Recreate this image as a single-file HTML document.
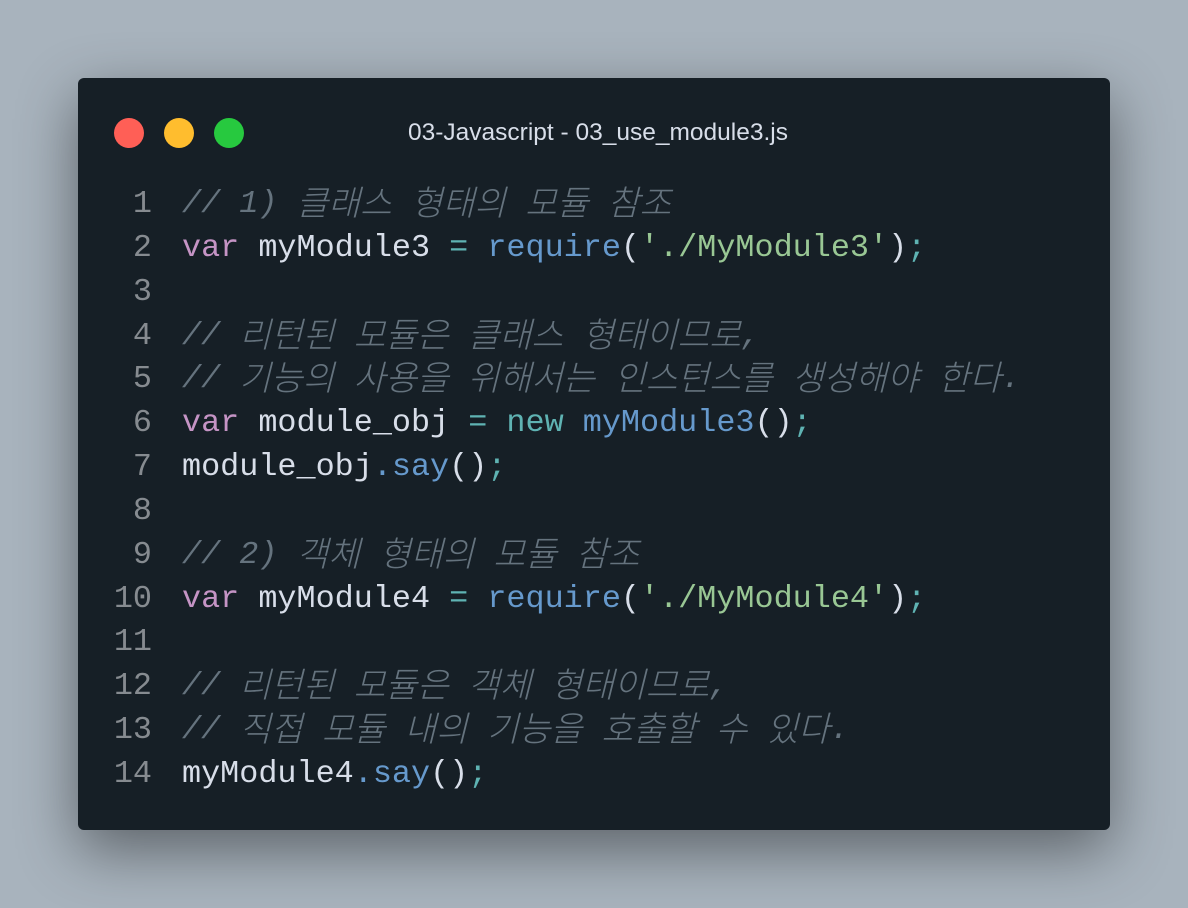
<!DOCTYPE html>
<html><head><meta charset="utf-8"><style>
html,body{margin:0;padding:0}
body{width:1188px;height:908px;background:#a8b3bd;position:relative;overflow:hidden}
.win{position:absolute;left:78px;top:78px;width:1032px;height:752px;background:#161f26;border-radius:6px;box-shadow:0 20px 60px rgba(0,0,0,0.45)}
.dot{position:absolute;top:40px;width:30px;height:30px;border-radius:50%}
.title{position:absolute;left:0;right:0;top:40px;text-align:center;font:24.5px "Liberation Sans",sans-serif;color:#d8dee9;line-height:30px;padding-left:8px}
.code{position:absolute;left:0;top:105px;font-family:"Liberation Mono","Noto Sans CJK KR",monospace;font-size:31.8px;color:#d8dee9;white-space:pre}
.code>div{height:43.85px;line-height:43.85px;overflow:visible}
.ln{display:inline-block;width:74px;text-align:right;color:#868b90;margin-right:30px}
.c{color:#65737e;font-style:italic}
.k{font-size:34.5px;line-height:0;font-family:"Noto Sans CJK KR",sans-serif;vertical-align:-3px;font-weight:300}
.kw{color:#c594c5}.op{color:#5fb3b3}.fn{color:#6699cc}.s{color:#99c794}
</style></head><body>
<div class="win">
<div class="dot" style="left:36px;background:#ff5f56"></div>
<div class="dot" style="left:86px;background:#ffbd2e"></div>
<div class="dot" style="left:136px;background:#27c93f"></div>
<div class="title">03-Javascript - 03_use_module3.js</div>
<div class="code"><div><span class="ln">1</span><span class="c">// 1) <span class="k">클래스</span> <span class="k">형태의</span> <span class="k">모듈</span> <span class="k">참조</span></span></div><div><span class="ln">2</span><span class="kw">var</span> myModule3 <span class="op">=</span> <span class="fn">require</span>(<span class="s">'./MyModule3'</span>)<span class="op">;</span></div><div><span class="ln">3</span></div><div><span class="ln">4</span><span class="c">// <span class="k">리턴된</span> <span class="k">모듈은</span> <span class="k">클래스</span> <span class="k">형태이므로</span>,</span></div><div><span class="ln">5</span><span class="c">// <span class="k">기능의</span> <span class="k">사용을</span> <span class="k">위해서는</span> <span class="k">인스턴스를</span> <span class="k">생성해야</span> <span class="k">한다</span>.</span></div><div><span class="ln">6</span><span class="kw">var</span> module_obj <span class="op">=</span> <span class="op">new</span> <span class="fn">myModule3</span>()<span class="op">;</span></div><div><span class="ln">7</span>module_obj<span class="fn">.say</span>()<span class="op">;</span></div><div><span class="ln">8</span></div><div><span class="ln">9</span><span class="c">// 2) <span class="k">객체</span> <span class="k">형태의</span> <span class="k">모듈</span> <span class="k">참조</span></span></div><div><span class="ln">10</span><span class="kw">var</span> myModule4 <span class="op">=</span> <span class="fn">require</span>(<span class="s">'./MyModule4'</span>)<span class="op">;</span></div><div><span class="ln">11</span></div><div><span class="ln">12</span><span class="c">// <span class="k">리턴된</span> <span class="k">모듈은</span> <span class="k">객체</span> <span class="k">형태이므로</span>,</span></div><div><span class="ln">13</span><span class="c">// <span class="k">직접</span> <span class="k">모듈</span> <span class="k">내의</span> <span class="k">기능을</span> <span class="k">호출할</span> <span class="k">수</span> <span class="k">있다</span>.</span></div><div><span class="ln">14</span>myModule4<span class="fn">.say</span>()<span class="op">;</span></div></div>
</div>
</body></html>
